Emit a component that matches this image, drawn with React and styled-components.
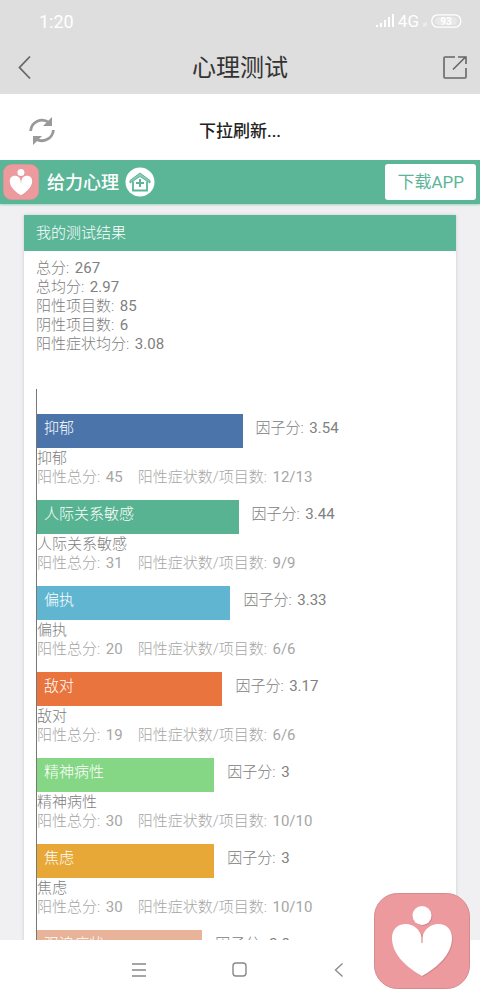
import React from "react";
import styled, { createGlobalStyle } from "styled-components";

const GlobalStyle = createGlobalStyle`
  * {
    box-sizing: border-box;
  }

  body {
    margin: 0;
    background: #fff;
    color: #808080;
    font-family: Roboto, "Noto Sans CJK SC", sans-serif;
    font-size: 15px;
    font-weight: 300;
    line-height: 19px;
  }

  button {
    border: none;
    background: none;
    padding: 0;
    cursor: pointer;
  }

  svg {
    display: block;
  }
`;

const Screen = styled.div`
  height: 100vh;
  display: flex;
  flex-direction: column;
  overflow: hidden;
`;

const TopArea = styled.div`
  flex: none;
  background: #dedede;
`;

const StatusBar = styled.div`
  height: 42px;
  padding: 0 18px 0 39px;
  display: flex;
  align-items: center;
  justify-content: space-between;
  color: #fff;
  font-size: 18px;
  font-weight: 400;
`;

const StatusIcons = styled.div`
  display: flex;
  align-items: center;
  gap: 4px;
  font-size: 17px;
  font-weight: 400;
`;

const Header = styled.header`
  height: 52px;
  padding: 0 12px;
  display: grid;
  grid-template-columns: 26px 1fr 26px;
  align-items: center;
`;

const Title = styled.h1`
  margin: 0;
  text-align: center;
  color: #333;
  font-size: 24px;
  line-height: 32px;
  font-weight: 400;
`;

const PullDown = styled.div`
  flex: none;
  height: 66px;
  padding: 8px 28px 0;
  display: grid;
  grid-template-columns: 28px 1fr 28px;
  align-items: center;
  text-align: center;
  color: #222;
  font-size: 17px;
  font-weight: 500;
`;

const BrandBar = styled.div`
  flex: none;
  height: 44px;
  padding: 0 4px 0 3px;
  display: flex;
  align-items: center;
  background: #5bb698;
  box-shadow: 0 1px 2px #9fd3c2;
  z-index: 1;
`;

const BrandName = styled.strong`
  margin: 0 6px 0 8px;
  color: #fff;
  font-size: 18px;
  font-weight: 500;
`;

const HomeLink = styled.a`
  margin-right: auto;
`;

const Download = styled.a`
  height: 36px;
  padding: 0 12px;
  display: flex;
  align-items: center;
  border-radius: 3px;
  background: #fff;
  color: #5bb698;
  font-size: 17px;
  font-weight: 400;
  text-decoration: none;
`;

const Content = styled.main`
  flex: 1;
  min-height: 0;
  overflow: hidden;
  padding: 11px 24px 0;
  background: #f0f0f2;
`;

const Card = styled.section`
  background: #fff;
  box-shadow: 0 0 3px #c8c8c8;
`;

const CardTitle = styled.h2`
  margin: 0;
  height: 36px;
  padding: 0 12px;
  display: flex;
  align-items: center;
  background: #5bb698;
  color: #fff;
  font-size: 15px;
  font-weight: 300;
`;

const Summary = styled.div`
  padding: 8px 12px 35px;
`;

const Value = styled.span`
  margin-left: 2px;
  font-weight: 400;
`;

const Chart = styled.div`
  margin: 0 16px 0 12px;
  padding-top: 25px;
  border-left: 1px solid #777;
`;

const Factor = styled.div`
  padding-bottom: 13px;
`;

const BarRow = styled.div`
  display: flex;
  margin-bottom: 1px;
`;

const Bar = styled.div`
  width: ${(props) => props.$size}%;
  height: 34px;
  padding: 5px 7px;
  background: ${(props) => props.$color};
  color: #fff;
`;

const Score = styled.div`
  padding: 5px 13px;
`;

const Detail = styled.div`
  color: #a6a6a6;
`;

const BottomNav = styled.nav`
  flex: none;
  height: 59px;
  padding-right: 2px;
  display: flex;
  align-items: center;
  justify-content: center;
  background: #fff;
`;

const NavButton = styled.button`
  width: 100px;
  height: 100%;
  display: flex;
  align-items: center;
  justify-content: center;
`;

const Floating = styled.button`
  position: fixed;
  right: 10px;
  bottom: 10px;
  z-index: 2;
`;

const summary = [
  ["总分", "267"],
  ["总均分", "2.97"],
  ["阳性项目数", "85"],
  ["阴性项目数", "6"],
  ["阳性症状均分", "3.08"],
];

const factors = [
  { name: "抑郁", score: "3.54", total: 45, count: "12/13", size: 51, color: "#4b74aa" },
  { name: "人际关系敏感", score: "3.44", total: 31, count: "9/9", size: 50, color: "#57b391" },
  { name: "偏执", score: "3.33", total: 20, count: "6/6", size: 48, color: "#60b5d0" },
  { name: "敌对", score: "3.17", total: 19, count: "6/6", size: 46, color: "#e9743e" },
  { name: "精神病性", score: "3", total: 30, count: "10/10", size: 44, color: "#85d785" },
  { name: "焦虑", score: "3", total: 30, count: "10/10", size: 44, color: "#e7a837" },
  { name: "强迫症状", score: "2.8", total: 28, count: "9/10", size: 41, color: "#e8b399" },
];

const heart =
  "M48 45C46 36 39 31 32 31C23 31 18 37 18 45C18 61 32 74 48 83C64 74 78 61 78 45C78 37 73 31 64 31C57 31 50 36 48 45Z";

const Logo = ({ size }) => (
  <svg width={size} height={size} viewBox="0 0 96 96" aria-hidden="true">
    <rect x="0.5" y="0.5" width="95" height="95" rx="23" fill="#ec9a9e" stroke="#d58a8e" />
    <g fill="#c77f83" opacity="0.6" transform="translate(1 1)">
      <circle cx="48" cy="22.5" r="9.5" />
      <path d={heart} />
    </g>
    <g fill="#fff">
      <circle cx="48" cy="22.5" r="9.5" />
      <path d={heart} />
    </g>
    <path d="M48 41V50" stroke="#c77f83" strokeWidth="1" />
  </svg>
);

const App = () => {
  return (
    <Screen>
      <GlobalStyle />
      <TopArea>
        <StatusBar>
          <span>1:20</span>
          <StatusIcons>
            <svg width="18" height="14" viewBox="0 0 18 14" fill="#fff">
              <path d="M0 11h2v2H0zM4 9h2v4H4zM8 6h2v7H8zM12 3h2v10h-2zM16 0h2v13h-2z" />
            </svg>
            <span>4G</span>
            <svg width="4" height="14" viewBox="0 0 4 14" stroke="#fff" strokeWidth="0.8">
              <path d="M1 9v4M3 8v4" />
            </svg>
            <svg width="31" height="14" viewBox="0 0 31 14">
              <rect x="0.8" y="0.8" width="29" height="12.4" rx="6" fill="none" stroke="#fff" strokeWidth="1.3" />
              <rect x="4" y="3" width="22" height="8" rx="4" fill="#fff" opacity="0.3" />
              <text x="15" y="10.5" textAnchor="middle" fontSize="10" fontWeight="700" fill="#fff">
                93
              </text>
            </svg>
          </StatusIcons>
        </StatusBar>
        <Header>
          <button aria-label="返回">
            <svg width="26" height="26" viewBox="0 0 26 26" fill="none" stroke="#666" strokeWidth="1.8">
              <path d="M18 1.5L7.5 12.5L18 23.5" />
            </svg>
          </button>
          <Title>心理测试</Title>
          <button aria-label="分享">
            <svg width="26" height="26" viewBox="0 0 26 26" fill="none" stroke="#666" strokeWidth="1.6">
              <path d="M13 2H3Q2 2 2 3V22Q2 23 3 23H23Q24 23 24 22V13M11 14.5L23 2.5M16 2H24V9" />
            </svg>
          </button>
        </Header>
      </TopArea>
      <PullDown>
        <svg width="28" height="28" viewBox="0 0 28 28" fill="none" stroke="#999" strokeWidth="2.8">
          <path d="M2.6 14A11.5 11.5 0 0 1 21 5.500M25.400 13A11.5 11.5 0 0 1 8 22" />
          <path d="M24 0V9H15L19 5ZM5 28V19H14L10 23Z" fill="#999" stroke="none" />
        </svg>
        <span>下拉刷新...</span>
      </PullDown>
      <BrandBar>
        <Logo size={36} />
        <BrandName>给力心理</BrandName>
        <HomeLink href="#home" aria-label="首页">
          <svg width="30" height="30" viewBox="0 0 30 30">
            <circle cx="15" cy="15" r="14.5" fill="#fff" />
            <g fill="none" stroke="#5bb698" strokeWidth="1.8">
              <path d="M5 16V13.500L15 6L25 13.500V16L15 9.500Z" fill="#8bcbb6" strokeWidth="1" />
              <path d="M8 14.500V23.500H22V14.500" />
              <path d="M15 12V20M11 16H19" strokeWidth="2" />
            </g>
          </svg>
        </HomeLink>
        <Download href="#download">下载APP</Download>
      </BrandBar>
      <Content>
        <Card>
          <CardTitle>我的测试结果</CardTitle>
          <Summary>
            {summary.map(([label, value]) => (
              <div key={label}>
                {label}: <Value>{value}</Value>
              </div>
            ))}
          </Summary>
          <Chart>
            {factors.map((item) => (
              <Factor key={item.name}>
                <BarRow>
                  <Bar $size={item.size} $color={item.color}>
                    {item.name}
                  </Bar>
                  <Score>
                    因子分: <Value>{item.score}</Value>
                  </Score>
                </BarRow>
                <div>{item.name}</div>
                <Detail>
                  阳性总分: <Value>{item.total}</Value>　阳性症状数/项目数: <Value>{item.count}</Value>
                </Detail>
              </Factor>
            ))}
          </Chart>
        </Card>
      </Content>
      <BottomNav>
        <NavButton aria-label="菜单">
          <svg width="14" height="14" viewBox="0 0 14 14" stroke="#888" strokeWidth="1.3">
            <path d="M0 1H14M0 7H14M0 13H14" />
          </svg>
        </NavButton>
        <NavButton aria-label="主屏幕">
          <svg width="15" height="15" viewBox="0 0 15 15" fill="none" stroke="#888" strokeWidth="1.4">
            <rect x="1" y="1" width="13" height="13" rx="3" />
          </svg>
        </NavButton>
        <NavButton aria-label="后退">
          <svg width="10" height="14" viewBox="0 0 10 14" fill="none" stroke="#888" strokeWidth="1.3">
            <path d="M8.5 0.5L1.5 7L8.5 13.5" />
          </svg>
        </NavButton>
      </BottomNav>
      <Floating aria-label="给力心理">
        <Logo size={96} />
      </Floating>
    </Screen>
  );
};

export default App;
